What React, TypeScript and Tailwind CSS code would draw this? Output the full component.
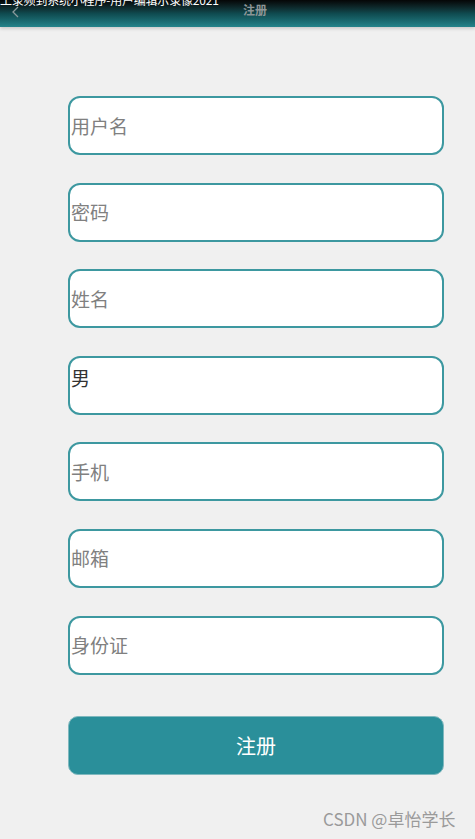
import { useState } from 'react';

const FIELDS = ['用户名', '密码', '姓名', '男', '手机', '邮箱', '身份证'];

function App() {
  const [values] = useState<Record<string, string>>({ 男: '男' });

  return (
    <div
      className="relative w-[475px] h-[839px] overflow-hidden bg-[#f0f0f0]"
      style={{ fontFamily: '"Noto Sans CJK SC", "Noto Sans", sans-serif' }}
    >
      {/* Header */}
      <div className="relative h-[27px] bg-gradient-to-b from-[#050707] via-[#0f4a4f] to-[#24848b] shadow-[0_2px_3px_rgba(0,0,0,0.15)] overflow-hidden">
        <div className="absolute left-0 top-[-9px] text-[12px] tracking-[-0.2px] leading-[18px] text-white whitespace-nowrap">
          工录频到系统小程序-用户编辑示录像2021
        </div>
        <svg className="absolute left-[10px] top-[6px] w-[12px] h-[12px]" viewBox="0 0 12 12" fill="none">
          <path d="M8 1L3 6l5 5" stroke="#8a9a9c" strokeWidth="1.3" />
        </svg>
        <div className="absolute left-[243px] top-[3px] text-[12px] leading-[14px] font-bold text-[#8d9697]">注册</div>
      </div>

      {/* Form */}
      <div className="flex flex-col gap-[27.6px] pl-[68px] pt-[69px] w-[444px]">
        {FIELDS.map(f => (
          <div
            key={f}
            className="h-[59px] rounded-[12px] border-2 border-[#3d98a0] bg-white pl-[1px] flex"
          >
            {values[f] ? (
              <span className="pt-[6px] text-[19px] leading-[28px] text-[#333]">{values[f]}</span>
            ) : (
              <span className="self-center text-[19px] leading-[28px] text-[#808080]">{f}</span>
            )}
          </div>
        ))}
        <button className="mt-[14px] h-[59px] rounded-[10px] bg-[#2a8f9a] text-white text-[20px] border border-[#7fb8be]">
          注册
        </button>
      </div>

      <div className="absolute left-[323px] top-[808px] text-[17px] leading-[22px] text-[#9a9a9a]">
        CSDN @卓怡学长
      </div>
    </div>
  );
}

export default App;
